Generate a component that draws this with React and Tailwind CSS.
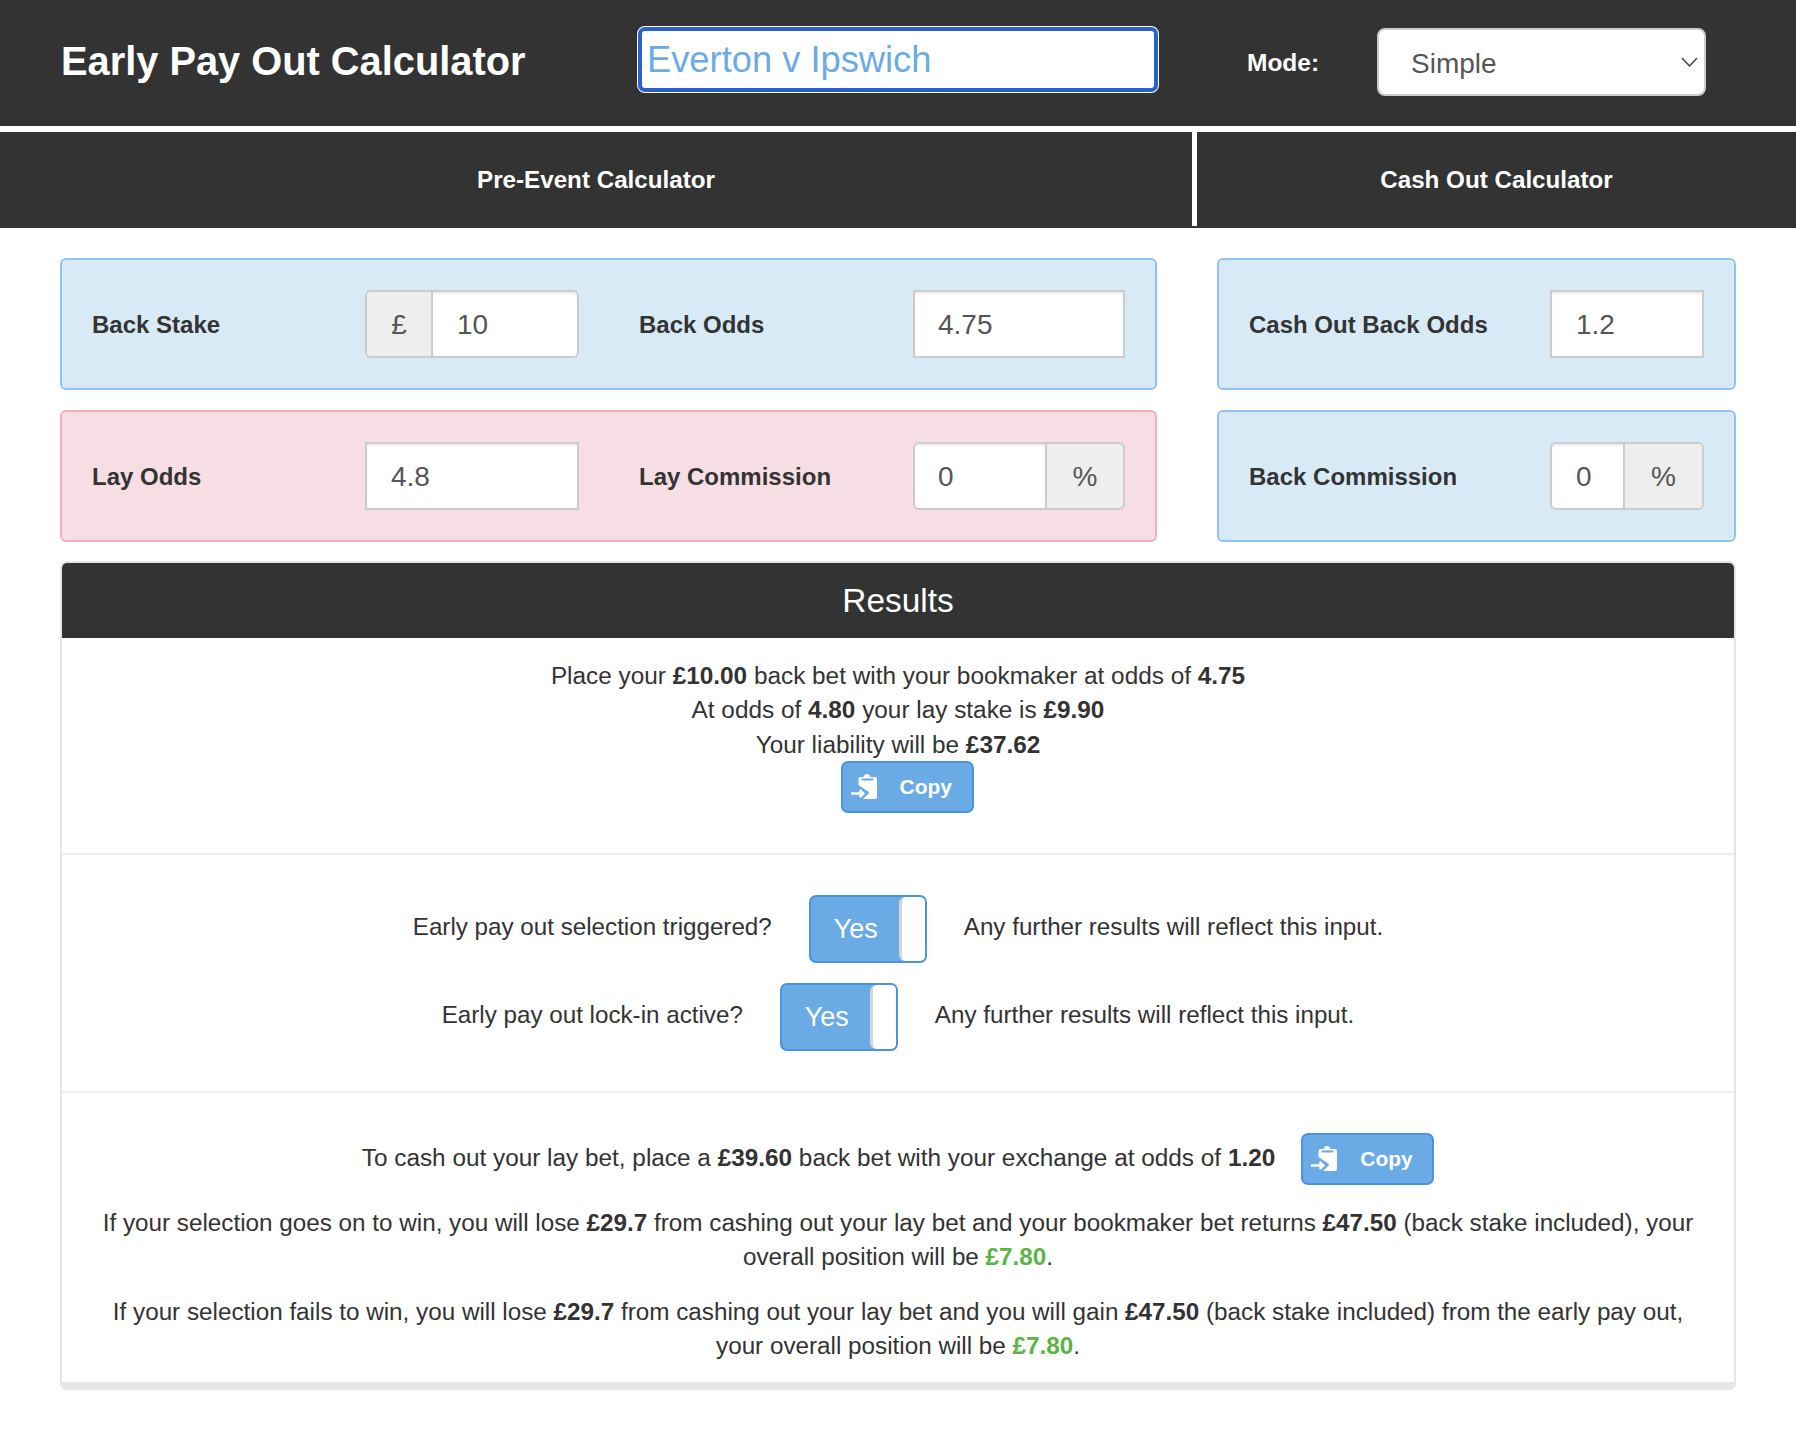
function PasteIcon() {
  return (
    <svg viewBox="0 0 26 26" className="w-[26px] h-[26px] shrink-0" fill="#fff">
      <path d="M9.500 3h3c.5-2 2-3 3.500-3s3 1 3.500 3h4.500a2 2 0 0 1 2 2v18a2 2 0 0 1-2 2H12l6.500-6.500L7.500 11V5a2 2 0 0 1 2-2z" />
      <rect x="10.500" y="4.500" width="12" height="2" rx="1" fill="#6aabe6" />
      <path d="M0 19.500h12M8.700 16l3.500 3.500-3.500 3.500" fill="none" stroke="#fff" strokeWidth="2.600" />
    </svg>
  )
}

function CopyButton() {
  return (
    <button className="flex items-center w-[133px] h-[52px] pl-[8px] bg-[#6aabe6] border-2 border-[#4a93e3] rounded-[7px] text-white text-[21px] font-bold">
      <PasteIcon />
      <span className="ml-[23px]">Copy</span>
    </button>
  )
}

function Toggle() {
  return (
    <div className="flex w-[118px] h-[68px] bg-[#6aabe6] border-2 border-[#4a93e3] rounded-[7px] overflow-hidden">
      <div className="flex-1 flex items-center justify-center text-white text-[27px] pl-[2px] pt-[1px]">Yes</div>
      <div className="w-[26px] bg-white border-l-[3px] border-[#d4d4d4] rounded-l-[6px]" />
    </div>
  )
}

function Box({ value, className }) {
  return (
    <div className={`flex items-center h-[68px] pt-[1px] bg-white border-2 border-[#cccccc] text-[28px] text-[#555] shadow-[inset_0_2px_2px_rgba(0,0,0,0.07)] ${className}`}>
      {value}
    </div>
  )
}

function Addon({ children, className }) {
  return (
    <div className={`flex items-center justify-center h-[68px] pt-[1px] bg-[#eeeeee] border-2 border-[#cccccc] text-[28px] text-[#555] ${className}`}>
      {children}
    </div>
  )
}

function Label({ children, className }) {
  return <div className={`font-bold text-[24px] text-[#333] pt-[2px] ${className}`}>{children}</div>
}

function Panel({ pink, children, className }) {
  return (
    <div className={`flex items-center h-[132px] pl-[30px] border-2 rounded-[6px] ${pink ? 'bg-[#f7dee4] border-[#f0b0bf]' : 'bg-[#d9eaf7] border-[#90c4ee]'} ${className}`}>
      {children}
    </div>
  )
}

function ToggleRow({ question, className }) {
  return (
    <div className={`flex items-center justify-center text-[24.200px] ${className}`}>
      <span className="pb-[4px]">{question}</span>
      <div className="mx-[37px]"><Toggle /></div>
      <span className="pb-[4px]">Any further results will reflect this input.</span>
    </div>
  )
}

export default function App() {
  return (
    <div className="min-h-[1444px] bg-white text-[#333] font-['Liberation_Sans',Arial,sans-serif]">
      {/* Top bar */}
      <div className="flex items-center h-[126px] bg-[#333333] pl-[61px]">
        <h1 className="w-[576px] mb-[2px] text-[39.800px] font-bold text-white">Early Pay Out Calculator</h1>
        <div className="flex items-center w-[522px] h-[67px] mb-[7px] pt-[2px] px-[8px] bg-white border-2 border-white rounded-[8px] outline-[4px] outline-[#2962cc] -outline-offset-[5px] text-[36.300px] text-[#6aabe6]">
          Everton v Ipswich
        </div>
        <div className="w-[88px] ml-[88px] mr-[42px] text-[24.500px] font-bold text-white">Mode:</div>
        <div className="relative flex items-center w-[329px] h-[68px] mb-[2px] pt-[3px] pl-[32px] bg-white border-2 border-[#cccccc] rounded-[8px] text-[28px] text-[#555]">
          Simple
          <svg viewBox="0 0 17 10" className="absolute right-[6px] top-[27px] w-[17px] h-[10px]" fill="none" stroke="#444" strokeWidth="1.500">
            <path d="M1 1l7.500 8L16 1" />
          </svg>
        </div>
      </div>

      {/* Tabs */}
      <div className="flex h-[96px] mt-[6px] bg-[#333333] text-white text-[24.200px] font-bold">
        <div className="flex items-center justify-center w-[1192px]">Pre-Event Calculator</div>
        <div className="w-[5px] h-[94px] bg-white" />
        <div className="flex-1 flex items-center justify-center">Cash Out Calculator</div>
      </div>

      <div className="px-[60px] pt-[30px]">
        {/* Calculator inputs */}
        <div className="flex gap-[60px]">
          <div className="flex flex-col gap-[20px] w-[1097px]">
            <Panel>
              <Label className="w-[273px]">Back Stake</Label>
              <Addon className="w-[66px] rounded-l-[6px] border-r-0">£</Addon>
              <Box value="10" className="w-[148px] pl-[24px] rounded-r-[6px] border-l-2" />
              <Label className="w-[274px] ml-[60px]">Back Odds</Label>
              <Box value="4.75" className="w-[212px] pl-[23px]" />
            </Panel>
            <Panel pink>
              <Label className="w-[273px]">Lay Odds</Label>
              <Box value="4.8" className="w-[214px] pl-[24px]" />
              <Label className="w-[274px] ml-[60px]">Lay Commission</Label>
              <Box value="0" className="w-[134px] pl-[23px] rounded-l-[6px]" />
              <Addon className="w-[78px] rounded-r-[6px] border-l-0">%</Addon>
            </Panel>
          </div>
          <div className="flex flex-col gap-[20px] w-[519px]">
            <Panel>
              <Label className="w-[301px]">Cash Out Back Odds</Label>
              <Box value="1.2" className="w-[154px] pl-[24px]" />
            </Panel>
            <Panel>
              <Label className="w-[301px]">Back Commission</Label>
              <Box value="0" className="w-[75px] pl-[24px] rounded-l-[6px]" />
              <Addon className="w-[79px] rounded-r-[6px] border-l-0">%</Addon>
            </Panel>
          </div>
        </div>

        {/* Results */}
        <div className="mt-[19px] h-[829px] border-2 border-b-[8px] border-[#e6e6e6] rounded-[7px] overflow-hidden text-[24.350px] leading-[34.300px]">
          <div className="flex items-center justify-center h-[75px] pt-[2px] bg-[#333333] text-white text-[33.400px]">Results</div>

          <div className="flex flex-col items-center h-[217px] pt-[21px] border-b-2 border-[#eeeeee]">
            <p>Place your <b>£10.00</b> back bet with your bookmaker at odds of <b>4.75</b></p>
            <p>At odds of <b>4.80</b> your lay stake is <b>£9.90</b></p>
            <p>Your liability will be <b>£37.62</b></p>
            <div className="-mt-[1px] ml-[18px]"><CopyButton /></div>
          </div>

          <div className="flex flex-col h-[238px] pt-[40px] border-b-2 border-[#eeeeee]">
            <ToggleRow question="Early pay out selection triggered?" />
            <ToggleRow question="Early pay out lock-in active?" className="mt-[20px]" />
          </div>

          <div className="flex flex-col items-center pt-[40px] px-[30px] text-center text-[24.250px]">
            <div className="flex items-center text-[24.350px]">
              <span className="pb-[2px]">To cash out your lay bet, place a <b>£39.60</b> back bet with your exchange at odds of <b>1.20</b></span>
              <div className="ml-[26px]"><CopyButton /></div>
            </div>
            <p className="mt-[21px]">
              If your selection goes on to win, you will lose <b>£29.7</b> from cashing out your lay bet and your bookmaker bet returns <b>£47.50</b> (back stake included), your overall position will be <b className="text-[#5cb346]">£7.80</b>.
            </p>
            <p className="mt-[20px]">
              If your selection fails to win, you will lose <b>£29.7</b> from cashing out your lay bet and you will gain <b>£47.50</b> (back stake included) from the early pay out, your overall position will be <b className="text-[#5cb346]">£7.80</b>.
            </p>
          </div>
        </div>
      </div>
    </div>
  )
}
